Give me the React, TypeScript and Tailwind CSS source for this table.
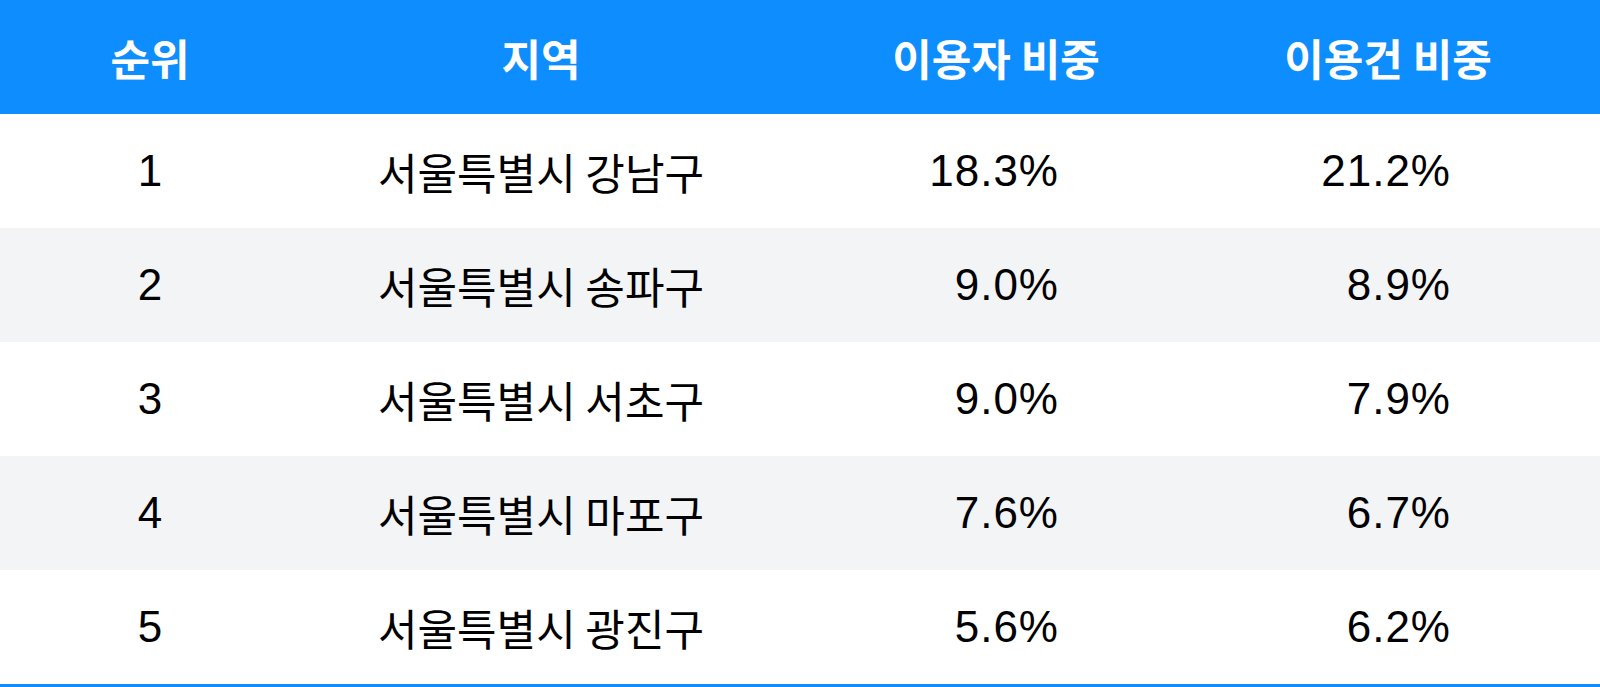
const rows = [
  { rank: 1, region: "서울특별시 강남구", users: "18.3%", uses: "21.2%" },
  { rank: 2, region: "서울특별시 송파구", users: "9.0%", uses: "8.9%" },
  { rank: 3, region: "서울특별시 서초구", users: "9.0%", uses: "7.9%" },
  { rank: 4, region: "서울특별시 마포구", users: "7.6%", uses: "6.7%" },
  { rank: 5, region: "서울특별시 광진구", users: "5.6%", uses: "6.2%" },
];

const kr = "font-['Noto_Sans_CJK_KR',sans-serif]";
const num = "font-['Liberation_Sans','Noto_Sans_CJK_KR',sans-serif]";

const App = () => {
  return (
    <div className="w-[1600px] h-[687px] bg-white overflow-hidden">
      <div className="border-b-[3px] border-[#0e8efe]">
        <div className="grid grid-cols-[300px_482px_428px_356px_34px] h-[114px] bg-[#0e8efe] text-white">
          <div className={`flex items-center justify-center text-[43px] font-bold ${kr}`}>순위</div>
          <div className={`flex items-center justify-center text-[43px] font-bold ${kr}`}>지역</div>
          <div className={`flex items-center justify-center text-[43px] font-bold ${kr}`}>이용자 비중</div>
          <div className={`flex items-center justify-center text-[43px] font-bold ${kr}`}>이용건 비중</div>
          <div />
        </div>

        {rows.map((r, i) => (
          <div
            key={r.rank}
            className={`grid grid-cols-[300px_482px_428px_356px_34px] h-[114px] text-black ${
              i % 2 === 1 ? "bg-[#f3f4f6]" : "bg-white"
            }`}
          >
            <div className={`flex items-center justify-center text-[44px] ${num}`}>{r.rank}</div>
            <div className={`flex items-center justify-center text-[43px] ${kr}`}>{r.region}</div>
            <div className={`flex items-center justify-end pr-[151px] text-[44px] tracking-[1px] ${num}`}>{r.users}</div>
            <div className={`flex items-center justify-end pr-[115px] text-[44px] tracking-[1px] ${num}`}>{r.uses}</div>
            <div />
          </div>
        ))}
      </div>
    </div>
  );
};

export default App;
